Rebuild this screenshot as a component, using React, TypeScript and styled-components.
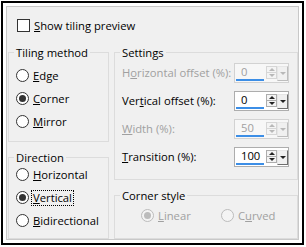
import React from "react";
import styled, { createGlobalStyle } from "styled-components";

const GlobalStyle = createGlobalStyle`
  html, body {
    margin: 0;
    padding: 0;
    background: #fff;
  }
  body {
    font-family: "Open Sans", "Noto Sans", sans-serif;
    font-size: 11.25px;
    color: #000;
  }
`;

const Frame = styled.div`
  box-sizing: border-box;
  width: 303px;
  height: 244px;
  margin: 1px 0 0 1px;
  border: 2px solid #000;
  padding: 3px;
  background: #fff;
`;

const Panel = styled.div`
  box-sizing: border-box;
  height: 100%;
  border: 1px solid #c8c8c8;
  background: #f0f0f0;
  display: flex;
  flex-direction: column;
  padding: 12px 0 0 1px;
`;

const CheckRow = styled.label`
  display: flex;
  align-items: center;
  gap: 4px;
  height: 13px;
  margin-left: 9px;
  line-height: 15px;
`;

const CheckBox = styled.span`
  box-sizing: border-box;
  width: 13px;
  height: 13px;
  border: 1px solid #333;
  background: #fff;
  flex: none;
`;

const Columns = styled.div`
  flex: 1;
  display: grid;
  grid-template-columns: 101px 184px;
  column-gap: 5px;
  margin-top: 13px;
`;

const Column = styled.div`
  display: flex;
  flex-direction: column;
  gap: 8px;
`;

const Group = styled.fieldset<{ $height?: number }>`
  box-sizing: border-box;
  margin: 0;
  padding: 0;
  min-width: 0;
  border: 1px solid #dcdcdc;
  height: ${(p) => (p.$height ? `${p.$height}px` : "auto")};
  flex: ${(p) => (p.$height ? "none" : 1)};
`;

const Legend = styled.legend`
  margin-left: 5px;
  padding: 0 2px;
  line-height: 15px;
  color: #000;
`;

const RadioList = styled.div<{ $top: number }>`
  display: flex;
  flex-direction: column;
  margin-top: ${(p) => p.$top}px;
  padding-left: 7px;
`;

const RadioRow = styled.label<{ $width?: number }>`
  display: flex;
  align-items: center;
  gap: 4px;
  height: 23px;
  width: ${(p) => (p.$width ? `${p.$width}px` : "auto")};
`;

const RadioCircle = styled.span<{ $checked?: boolean; $disabled?: boolean }>`
  box-sizing: border-box;
  width: 13px;
  height: 13px;
  border-radius: 50%;
  border: 1px solid ${(p) => (p.$disabled ? "#bcbcbc" : "#333")};
  background: ${(p) => (p.$disabled ? "#f4f4f4" : "#fff")};
  display: flex;
  align-items: center;
  justify-content: center;
  flex: none;

  &::after {
    content: "";
    display: ${(p) => (p.$checked ? "block" : "none")};
    width: 7px;
    height: 7px;
    border-radius: 50%;
    background: ${(p) => (p.$disabled ? "#bcbcbc" : "#333")};
  }
`;

const Text = styled.span<{ $disabled?: boolean; $focused?: boolean }>`
  color: ${(p) => (p.$disabled ? "#a0a0a0" : "#000")};
  line-height: 14px;
  outline: ${(p) => (p.$focused ? "1px dotted #000" : "none")};
  outline-offset: 0;
  padding: 0 1px;
  margin-left: -1px;
  white-space: nowrap;
`;

const Key = styled.span`
  text-decoration: underline;
  text-underline-offset: 1px;
`;

const SettingsGrid = styled.div`
  display: grid;
  grid-template-columns: 112px 55px;
  grid-auto-rows: 20px;
  row-gap: 8px;
  align-items: center;
  padding: 3px 0 0 7px;
`;

const Spin = styled.div<{ $disabled?: boolean }>`
  box-sizing: border-box;
  height: 20px;
  display: flex;
  border: 1px solid ${(p) => (p.$disabled ? "#d2d2d2" : "#adadad")};
  background: ${(p) => (p.$disabled ? "#f7f7f7" : "#fff")};
`;

const Field = styled.div`
  width: 31px;
  display: flex;
  flex-direction: column;
  justify-content: space-between;
  padding: 1px 0 1px 1px;
  box-sizing: border-box;
`;

const Value = styled.span<{ $disabled?: boolean }>`
  padding-left: 5px;
  line-height: 14px;
  color: ${(p) => (p.$disabled ? "#a0a0a0" : "#000")};
`;

const Bar = styled.div`
  height: 3px;
  width: 28px;
  background: #3c8ee6;
`;

const UpDown = styled.div<{ $disabled?: boolean }>`
  box-sizing: border-box;
  width: 11px;
  margin: 2px 0 3px;
  border: 1px solid ${(p) => (p.$disabled ? "#d6d6d6" : "#adadad")};
  background: #f4f4f4;
  display: flex;
  flex-direction: column;
`;

const Half = styled.div<{ $bottom?: boolean; $disabled?: boolean }>`
  flex: 1;
  display: flex;
  align-items: center;
  justify-content: center;
  border-top: ${(p) =>
    p.$bottom ? `1px solid ${p.$disabled ? "#d6d6d6" : "#adadad"}` : "none"};
`;

const Arrow = styled.span<{ $up?: boolean; $disabled?: boolean }>`
  width: 0;
  height: 0;
  border-left: 3px solid transparent;
  border-right: 3px solid transparent;
  ${(p) =>
    p.$up
      ? `border-bottom: 3px solid ${p.$disabled ? "#b8b8b8" : "#222"};`
      : `border-top: 3px solid ${p.$disabled ? "#b8b8b8" : "#222"};`}
`;

const Drop = styled.div<{ $disabled?: boolean }>`
  box-sizing: border-box;
  width: 11px;
  margin: 2px 0 1px;
  border-top: 1px solid #e6e6e6;
  border-left: 1px solid #e6e6e6;
  border-right: 1px solid ${(p) => (p.$disabled ? "#bdbdbd" : "#6e6e6e")};
  border-bottom: 1px solid ${(p) => (p.$disabled ? "#bdbdbd" : "#6e6e6e")};
  background: #f0f0f0;
  display: flex;
  justify-content: center;
  padding-top: 5px;
`;

const CornerRow = styled.div`
  display: flex;
  margin-top: 1px;
  padding-left: 26px;
`;

interface SpinProps {
  value: string;
  disabled?: boolean;
}

function SpinInput({ value, disabled }: SpinProps) {
  return (
    <Spin $disabled={disabled}>
      <Field>
        <Value $disabled={disabled}>{value}</Value>
        <Bar />
      </Field>
      <UpDown $disabled={disabled}>
        <Half $disabled={disabled}>
          <Arrow $up $disabled={disabled} />
        </Half>
        <Half $bottom $disabled={disabled}>
          <Arrow $disabled={disabled} />
        </Half>
      </UpDown>
      <Drop $disabled={disabled}>
        <Arrow $disabled={disabled} />
      </Drop>
    </Spin>
  );
}

interface RadioProps {
  children: React.ReactNode;
  checked?: boolean;
  disabled?: boolean;
  focused?: boolean;
  width?: number;
}

function Radio({ children, checked, disabled, focused, width }: RadioProps) {
  return (
    <RadioRow $width={width}>
      <RadioCircle $checked={checked} $disabled={disabled} />
      <Text $disabled={disabled} $focused={focused}>
        {children}
      </Text>
    </RadioRow>
  );
}

export default function App(): JSX.Element {
  return (
    <>
      <GlobalStyle />
      <Frame>
        <Panel>
          <CheckRow>
            <CheckBox />
            <Text>
              <Key>S</Key>how tiling preview
            </Text>
          </CheckRow>
          <Columns>
            <Column>
              <Group $height={97}>
                <Legend>Tiling method</Legend>
                <RadioList $top={4}>
                  <Radio>
                    <Key>E</Key>dge
                  </Radio>
                  <Radio checked>
                    <Key>C</Key>orner
                  </Radio>
                  <Radio>
                    <Key>M</Key>irror
                  </Radio>
                </RadioList>
              </Group>
              <Group>
                <Legend>Direction</Legend>
                <RadioList $top={-2}>
                  <Radio>
                    <Key>H</Key>orizontal
                  </Radio>
                  <Radio checked focused>
                    <Key>V</Key>ertical
                  </Radio>
                  <Radio>
                    <Key>B</Key>idirectional
                  </Radio>
                </RadioList>
              </Group>
            </Column>
            <Column>
              <Group $height={135}>
                <Legend>Settings</Legend>
                <SettingsGrid>
                  <Text $disabled>
                    H<Key>o</Key>rizontal offset (%):
                  </Text>
                  <SpinInput value="0" disabled />
                  <Text>
                    Ver<Key>t</Key>ical offset (%):
                  </Text>
                  <SpinInput value="0" />
                  <Text $disabled>
                    <Key>W</Key>idth (%):
                  </Text>
                  <SpinInput value="50" disabled />
                  <Text>
                    <Key>T</Key>ransition (%):
                  </Text>
                  <SpinInput value="100" />
                </SettingsGrid>
              </Group>
              <Group>
                <Legend>Corner style</Legend>
                <CornerRow>
                  <Radio checked disabled width={80}>
                    <Key>L</Key>inear
                  </Radio>
                  <Radio disabled>
                    C<Key>u</Key>rved
                  </Radio>
                </CornerRow>
              </Group>
            </Column>
          </Columns>
        </Panel>
      </Frame>
    </>
  );
}
